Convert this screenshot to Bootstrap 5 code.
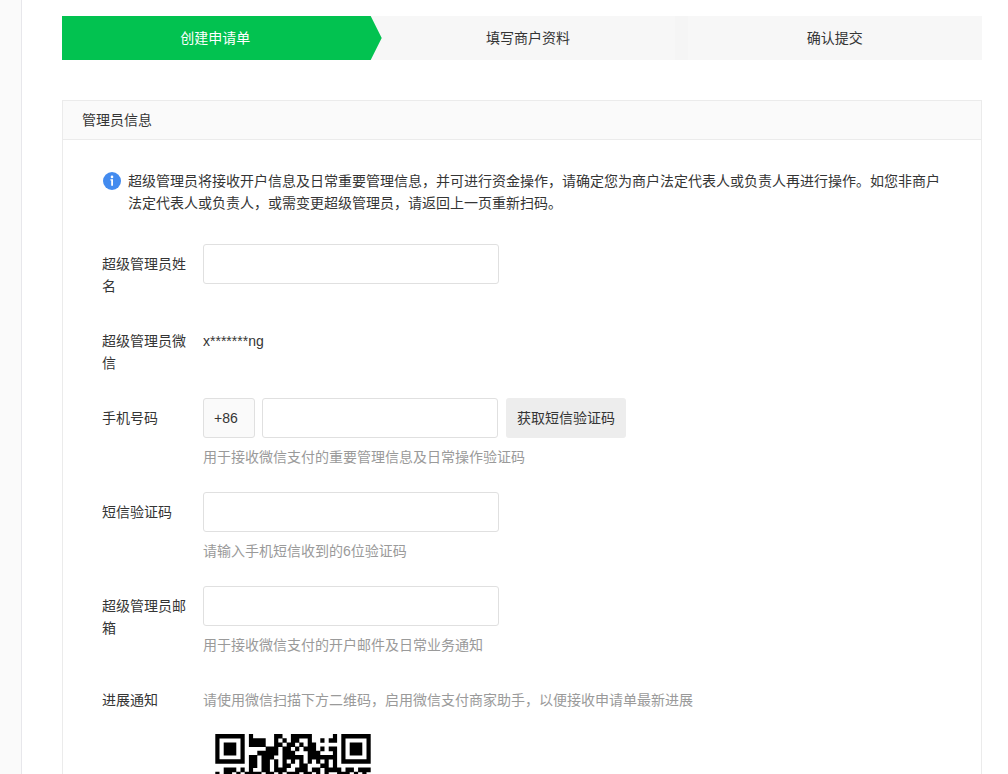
<!DOCTYPE html>
<html lang="zh-CN">
<head>
<meta charset="utf-8">
<meta name="viewport" content="width=device-width, initial-scale=1">
<title>创建申请单</title>
<link href="https://cdn.jsdelivr.net/npm/bootstrap@5.3.0/dist/css/bootstrap.min.css" rel="stylesheet">
<style>
  body { font-family: "Liberation Sans", "Noto Sans CJK SC", sans-serif; font-size: 14px; line-height: 22px; color: #353535; background: #fff; }
  .side-rail { width: 22px; background: #fafafa; border-right: 1px solid #e7e7eb; }
  .page-main { padding: 16px 26px 0 40px; min-width: 0; }
  .steps { display: grid; grid-template-columns: repeat(3, 1fr); background: #f7f7f7; line-height: 44px; margin-bottom: 40px; }
  .step-item { text-align: center; }
  .step-item + .step-item { padding-left: 12px; }
  .step-active { color: #fff; margin-right: -13px; padding-right: 13px; background: #02c250; clip-path: polygon(0 0, calc(100% - 11px) 0, 100% 50%, calc(100% - 11px) 100%, 0 100%); }
  .step-last { background: linear-gradient(90deg, #f5f5f5 13px, #f7f7f7 13px); }
  .panel { border-color: #ebebeb; border-radius: 0; color: inherit; }
  .panel-head { background: #fafafa; border-bottom: 1px solid #ebebeb; padding: 8px 19px; margin: 0; font-size: 14px; line-height: 22px; font-weight: 400; }
  .panel-content { padding: 30px 39px; }
  .tip { gap: 7px; margin-bottom: 30px; }
  .tip svg { margin-top: 2px; }
  .field-row { gap: 13px; margin-bottom: 24px; }
  .field-name { width: 88px; padding-top: 9px; flex: none; }
  .field-text { padding-top: 9px; }
  .form-control { height: 40px; width: 296px; border: 1px solid #e0e0e0; border-radius: 3px; font-size: 14px; padding: 8px 10px; color: #353535; }
  .area-code { width: 52px; background: #fafafa; }
  .phone { width: 236px; margin: 0 8px 0 7px; }
  .btn-code { width: 120px; height: 40px; padding: 0; font-size: 14px; border: 0; border-radius: 3px; background: #ededed; color: #353535; }
  .hint { color: #9a9a9a; }
  .hint-below { margin-top: 8px; }
  .qr { display: block; margin: 23px 0 0 12px; }
</style>
</head>
<body>
<div class="d-flex min-vh-100 overflow-hidden">
  <aside class="side-rail flex-shrink-0"></aside>
  <main class="page-main flex-grow-1">
    <div class="steps">
      <div class="step-item step-active">创建申请单</div>
      <div class="step-item">填写商户资料</div>
      <div class="step-item step-last">确认提交</div>
    </div>
    <section class="card panel">
      <h1 class="panel-head">管理员信息</h1>
      <form class="panel-content">
        <div class="tip d-flex">
          <svg class="flex-shrink-0" width="19" height="19" viewBox="0 0 19 19" aria-hidden="true"><circle cx="10" cy="9" r="9" fill="#438bef"/><circle cx="10" cy="4.9" r="1.3" fill="#fff"/><path d="M8.4 7.2H11v6.6H9.2V8.4h-.8z" fill="#fff"/></svg>
          <div>超级管理员将接收开户信息及日常重要管理信息，并可进行资金操作，请确定您为商户法定代表人或负责人再进行操作。如您非商户法定代表人或负责人，或需变更超级管理员，请返回上一页重新扫码。</div>
        </div>
        <div class="field-row d-flex">
          <label class="field-name" for="name">超级管理员姓名</label>
          <div><input class="form-control" id="name" type="text"></div>
        </div>
        <div class="field-row d-flex">
          <div class="field-name">超级管理员微信</div>
          <div class="field-text">x*******ng</div>
        </div>
        <div class="field-row d-flex">
          <label class="field-name" for="phone">手机号码</label>
          <div>
            <div class="d-flex">
              <input class="form-control area-code" type="text" value="+86" readonly aria-label="区号">
              <input class="form-control phone" id="phone" type="tel">
              <button class="btn btn-code" type="button">获取短信验证码</button>
            </div>
            <div class="hint hint-below">用于接收微信支付的重要管理信息及日常操作验证码</div>
          </div>
        </div>
        <div class="field-row d-flex">
          <label class="field-name" for="sms">短信验证码</label>
          <div>
            <input class="form-control" id="sms" type="text">
            <div class="hint hint-below">请输入手机短信收到的6位验证码</div>
          </div>
        </div>
        <div class="field-row d-flex">
          <label class="field-name" for="mail">超级管理员邮箱</label>
          <div>
            <input class="form-control" id="mail" type="email">
            <div class="hint hint-below">用于接收微信支付的开户邮件及日常业务通知</div>
          </div>
        </div>
        <div class="field-row d-flex mb-0">
          <div class="field-name">进展通知</div>
          <div class="field-text">
            <div class="hint">请使用微信扫描下方二维码，启用微信支付商家助手，以便接收申请单最新进展</div>
            <svg class="qr" id="qr" width="156" height="42" viewBox="0 0 37 10" role="img" aria-label="二维码"></svg>
          </div>
        </div>
      </form>
    </section>
  </main>
</div>
<script src="https://cdn.jsdelivr.net/npm/bootstrap@5.3.0/dist/js/bootstrap.bundle.min.js"></script>
<script>
  // One string per row of modules, 1 = dark
  const rows = [
    "1111111010000011001111100000101111111",
    "1000001011110010101100100101101000001",
    "1011101011110011011010110000001011101",
    "1011101000001110110101110101101011101",
    "1011101000111110111000111000101011101",
    "1000001011011100111110111111101000001",
    "1111111011011010101010101010101111111",
    "0000000011011010110011000110100000000",
    "0011101010011011100111011011110110111",
    "1011010111101101011101101010011101010"
  ];
  let d = "";
  rows.forEach((row, y) => {
    for (const run of row.matchAll(/1+/g)) d += `M${run.index} ${y}h${run[0].length}v1.1h-${run[0].length}z`;
  });
  document.getElementById("qr").innerHTML = `<path d="${d}"/>`;
</script>
</body>
</html>
